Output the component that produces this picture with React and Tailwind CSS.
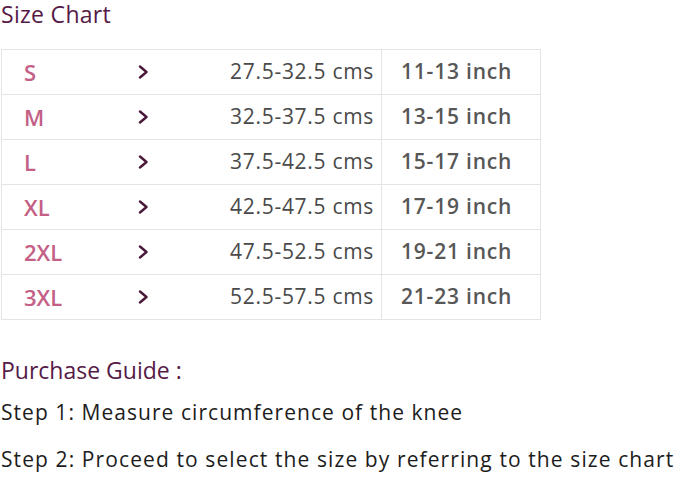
import React from 'react';

const rows = [
  { size: 'S', cms: '27.5-32.5 cms', inch: '11-13 inch' },
  { size: 'M', cms: '32.5-37.5 cms', inch: '13-15 inch' },
  { size: 'L', cms: '37.5-42.5 cms', inch: '15-17 inch' },
  { size: 'XL', cms: '42.5-47.5 cms', inch: '17-19 inch' },
  { size: '2XL', cms: '47.5-52.5 cms', inch: '19-21 inch' },
  { size: '3XL', cms: '52.5-57.5 cms', inch: '21-23 inch' },
];

const Chevron = () => (
  <svg width="11" height="14" viewBox="0 0 11 14" fill="none">
    <path d="M2 1.5 L8.5 7 L2 12.5" stroke="#4a1838" strokeWidth="2.4" strokeLinecap="round" strokeLinejoin="round" />
  </svg>
);

const SizeRow = ({ size, cms, inch }) => {
  return (
    <div className="grid grid-cols-[379px_160px] h-[45px] border-b border-[#e4e4e4]">
      <div className="flex items-center pl-[22px] pr-[7px]">
        <span className="w-[114px] text-[22px] font-semibold text-[#c45f86]">{size}</span>
        <Chevron />
        <span className="ml-auto text-[21px] tracking-[0.7px] text-[#4a4a4a]">{cms}</span>
      </div>
      <div className="flex items-center border-l border-[#e4e4e4] pl-[19px] text-[21px] tracking-[0.8px] font-semibold text-[#575757]">
        {inch}
      </div>
    </div>
  );
};

export default function App() {
  return (
    <div className="w-[679px] h-[477px] bg-white overflow-hidden font-['Open_Sans',sans-serif]">
      <h1 className="pl-[1px] pt-[1px] text-[23px] leading-[27px] tracking-[0.3px] text-[#561a47]">Size Chart</h1>
      <div className="mt-[21px] ml-[1px] w-[540px] border-t border-l border-r border-[#e4e4e4]">
        {rows.map((r) => (
          <SizeRow key={r.size} {...r} />
        ))}
      </div>
      <h2 className="mt-[36px] pl-[1px] text-[23px] leading-[28px] text-[#561a47]">Purchase Guide :</h2>
      <p className="mt-[15px] pl-[1px] text-[21px] leading-[26px] tracking-[1.05px] text-[#1c1c1c]">Step 1: Measure circumference of the knee</p>
      <p className="mt-[21px] pl-[1px] text-[21px] leading-[26px] tracking-[1.1px] text-[#1c1c1c]">Step 2: Proceed to select the size by referring to the size chart</p>
    </div>
  );
}
